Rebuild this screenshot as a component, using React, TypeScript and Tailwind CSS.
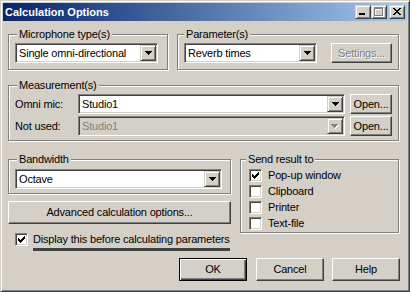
import type { ReactNode } from "react";

const raised =
  "border border-t-white border-l-white border-r-[#404040] border-b-[#404040] shadow-[inset_-1px_-1px_0_#808080]";
const raisedSmall =
  "border border-t-[#d4d0c8] border-l-[#d4d0c8] border-r-[#404040] border-b-[#404040] shadow-[inset_1px_1px_0_#fff,inset_-1px_-1px_0_#808080]";
const sunken =
  "border border-t-[#808080] border-l-[#808080] border-r-white border-b-white shadow-[inset_1px_1px_0_#404040,inset_-1px_-1px_0_#d4d0c8]";

const Arrow = ({ disabled }: { disabled?: boolean }) =>
  disabled ? (
    <svg width="8" height="5" shapeRendering="crispEdges">
      <path d="M1 1h7v1H1zM2 2h5v1H2zM3 3h3v1H3zM4 4h1v1H4z" fill="#fff" />
      <path d="M0 0h7v1H0zM1 1h5v1H1zM2 2h3v1H2zM3 3h1v1H3z" fill="#808080" />
    </svg>
  ) : (
    <svg width="7" height="4" shapeRendering="crispEdges">
      <path d="M0 0h7v1H0zM1 1h5v1H1zM2 2h3v1H2zM3 3h1v1H3z" fill="#000" />
    </svg>
  );

const Combo = ({
  value,
  className,
  disabled,
}: {
  value: string;
  className: string;
  disabled?: boolean;
}) => (
  <div
    className={`h-[20px] flex p-[1px] ${sunken} ${disabled ? "bg-[#d4d0c8] text-[#808080]" : "bg-white"} ${className}`}
  >
    <span className="flex-1 pl-[2px] leading-[16px] whitespace-nowrap overflow-hidden">
      {value}
    </span>
    <div className={`w-[16px] h-[16px] flex items-center justify-center bg-[#d4d0c8] ${raisedSmall}`}>
      <Arrow disabled={disabled} />
    </div>
  </div>
);

const Button = ({
  children,
  className,
  disabled,
}: {
  children: ReactNode;
  className: string;
  disabled?: boolean;
}) => (
  <div
    className={`flex items-center justify-center whitespace-nowrap ${raised} ${
      disabled ? "text-[#808080] [text-shadow:1px_1px_0_#fff]" : ""
    } ${className}`}
  >
    {children}
  </div>
);

const Check = ({ checked }: { checked?: boolean }) => (
  <div className={`w-[13px] h-[13px] shrink-0 bg-white flex items-center justify-center ${sunken}`}>
    {checked && (
      <svg width="7" height="7" shapeRendering="crispEdges">
        <path
          d="M0 2h1v3H0zM1 3h1v3H1zM2 4h1v3H2zM3 3h1v3H3zM4 2h1v3H4zM5 1h1v3H5zM6 0h1v3H6z"
          fill="#000"
        />
      </svg>
    )}
  </div>
);

const Group = ({
  label,
  labelClass,
  className,
  children,
}: {
  label: string;
  labelClass: string;
  className: string;
  children: ReactNode;
}) => (
  <div
    className={`relative border border-[#808080] shadow-[inset_1px_1px_0_#fff,1px_1px_0_#fff] ${className}`}
  >
    <span
      className={`absolute top-[-7px] bg-[#d4d0c8] px-[2px] leading-[13px] whitespace-nowrap ${labelClass}`}
    >
      {label}
    </span>
    {children}
  </div>
);

const TitleButton = ({ children, className }: { children: ReactNode; className?: string }) => (
  <div className={`w-[16px] h-[14px] bg-[#d4d0c8] ${raisedSmall} ${className ?? ""}`}>{children}</div>
);

const TitleBar = () => (
  <div className="h-[18px] flex items-center bg-linear-to-r from-[#0a246a] to-[#a6caf0]">
    <span className="pl-[2px] text-white font-bold tracking-normal">Calculation Options</span>
    <div className="ml-auto flex items-center pr-[2px]">
      <TitleButton>
        <svg width="14" height="12" shapeRendering="crispEdges">
          <path d="M3 7h6v2H3z" fill="#000" />
        </svg>
      </TitleButton>
      <TitleButton>
        <svg width="14" height="12" shapeRendering="crispEdges">
          <path d="M3 2h9v2H3zM3 4h1v7H3zM11 4h1v7h-1zM3 10h9v1H3z" fill="#fff" />
          <path d="M2 1h9v2H2zM2 3h1v7H2zM10 3h1v7h-1zM2 9h9v1H2z" fill="#808080" />
        </svg>
      </TitleButton>
      <TitleButton className="ml-[2px]">
        <svg width="14" height="12" shapeRendering="crispEdges">
          <path
            d="M3 2h2v1H3zM9 2h2v1H9zM4 3h2v1H4zM8 3h2v1H8zM5 4h4v1H5zM6 5h2v1H6zM5 6h4v1H5zM4 7h2v1H4zM8 7h2v1H8zM3 8h2v1H3zM9 8h2v1H9z"
            fill="#000"
          />
        </svg>
      </TitleButton>
    </div>
  </div>
);

export default function App() {
  return (
    <div
      className={`w-[410px] h-[292px] bg-[#d4d0c8] text-black text-[11px] leading-[13px] tracking-[-0.18px] font-['Liberation_Sans',Arial,sans-serif] p-[2px] flex flex-col border border-t-[#d4d0c8] border-l-[#d4d0c8] border-r-[#404040] border-b-[#404040] shadow-[inset_1px_1px_0_#fff,inset_-1px_-1px_0_#808080]`}
    >
      <TitleBar />
      <div className="pl-[5px] pr-[8px] pt-[13px] flex flex-col">
        <div className="flex gap-[9px]">
          <Group
            label="Microphone type(s)"
            labelClass="left-[8px]"
            className="w-[160px] h-[36px] pl-[6px] pt-[8px]"
          >
            <Combo value="Single omni-directional" className="w-[143px]" />
          </Group>
          <Group
            label="Parameter(s)"
            labelClass="left-[6px]"
            className="flex-1 h-[36px] pl-[6px] pt-[8px] flex items-start"
          >
            <Combo value="Reverb times" className="w-[133px]" />
            <Button disabled className="ml-[14px] w-[61px] h-[20px]">
              Settings...
            </Button>
          </Group>
        </div>

        <Group
          label="Measurement(s)"
          labelClass="left-[8px]"
          className="mt-[15px] h-[56px] pl-[6px] pt-[8px] flex flex-col gap-[2px]"
        >
          <div className="flex items-center h-[20px]">
            <span className="w-[63px]">Omni mic:</span>
            <Combo value="Studio1" className="w-[267px]" />
            <Button className="ml-[5px] w-[42px] h-[20px]">Open...</Button>
          </div>
          <div className="flex items-center h-[20px]">
            <span className="w-[63px]">Not used:</span>
            <Combo value="Studio1" className="w-[267px]" disabled />
            <Button className="ml-[5px] w-[42px] h-[20px]">Open...</Button>
          </div>
        </Group>

        <div className="flex gap-[9px] mt-[18px]">
          <div className="w-[223px] flex flex-col">
            <Group
              label="Bandwidth"
              labelClass="left-[8px]"
              className="h-[35px] pl-[6px] pt-[9px]"
            >
              <Combo value="Octave" className="w-[207px]" />
            </Group>
            <Button className="mt-[7px] h-[23px] w-full">Advanced calculation options...</Button>
          </div>
          <Group
            label="Send result to"
            labelClass="left-[5px]"
            className="flex-1 h-[74px] pl-[8px] pt-[9px] flex flex-col gap-[3px]"
          >
            {[
              ["Pop-up window", true],
              ["Clipboard", false],
              ["Printer", false],
              ["Text-file", false],
            ].map(([label, checked]) => (
              <div key={label as string} className="flex items-center h-[13px]">
                <Check checked={checked as boolean} />
                <span className="ml-[6px]">{label as string}</span>
              </div>
            ))}
          </Group>
        </div>

        <div className="flex items-center h-[13px] pl-[7px]">
          <Check checked />
          <span className="ml-[5px] whitespace-nowrap">Display this before calculating parameters</span>
        </div>
        <div className="ml-[25px] w-[197px] h-[3px] mt-[2px] bg-[#404040]" />

        <div className="flex justify-end mt-[7px] -mr-[1px]">
          <div className="w-[68px] h-[23px] border border-black flex items-center justify-center shadow-[inset_1px_1px_0_#fff,inset_-1px_-1px_0_#404040,inset_-2px_-2px_0_#808080]">
            OK
          </div>
          <Button className="ml-[9px] w-[68px] h-[23px]">Cancel</Button>
          <Button className="ml-[8px] w-[68px] h-[23px]">Help</Button>
        </div>
      </div>
    </div>
  );
}
